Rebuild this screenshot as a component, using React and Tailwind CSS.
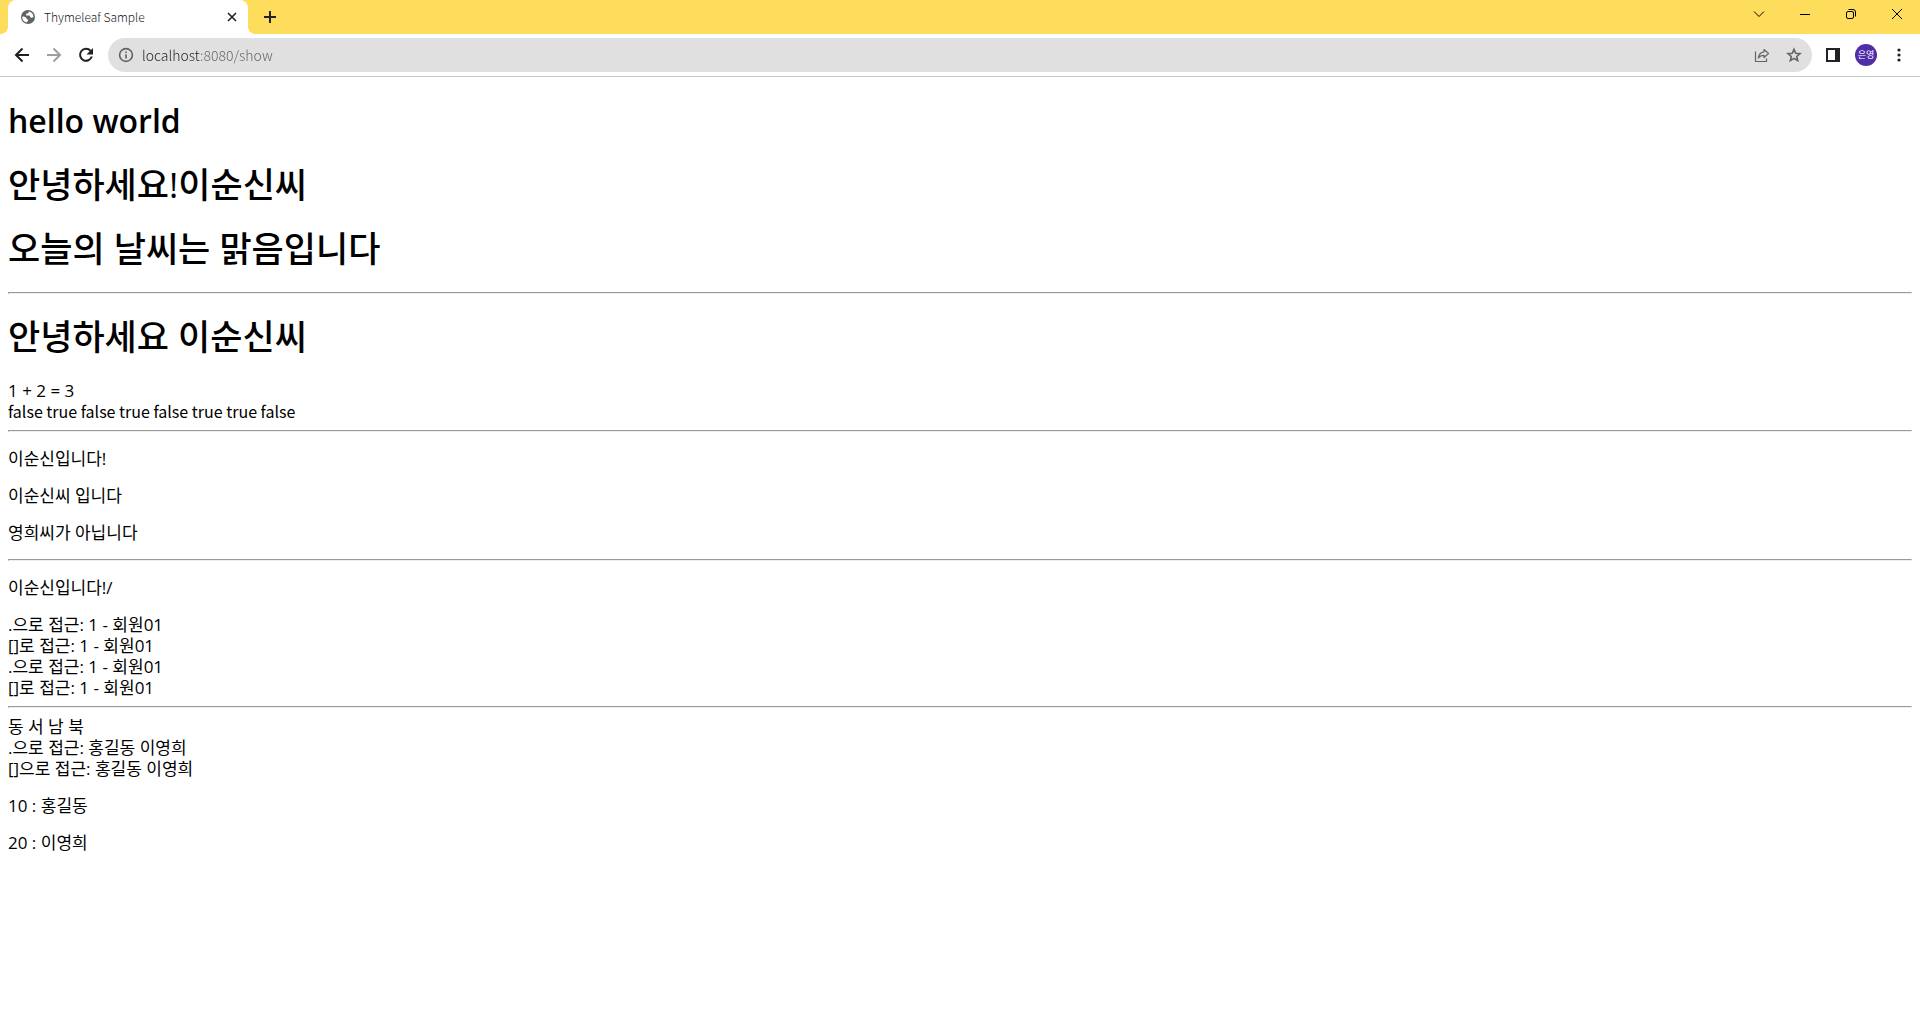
function Icon({ className = "size-5", children }) {
  return (
    <svg className={className} viewBox="0 0 20 20" fill="none" stroke="currentColor" strokeWidth="2" aria-hidden="true">
      {children}
    </svg>
  );
}

function GlobeIcon() {
  return (
    <svg className="size-4 shrink-0" viewBox="0 0 16 16" aria-hidden="true">
      <circle cx="8" cy="8" r="7" fill="#5f6368" />
      <path
        d="M8.8 2.4c-.3.9-.2 1.500-.9 1.800-.8.300-1.600.200-1.900 1-.2.700.3 1.300 1.100 1.400 1.200.1 2.500-.1 3 .9.300.6 0 1.100.8 1.200.9.100 1.500-.3 2.500-.4a5.800 5.800 0 0 0-4.600-5.900ZM2.300 7.500c1.300.1 2.900.1 3.800.9.700.7.200 1.500 1 1.900.7.300 1.200.2 1.200.9 0 .8-1.300 1-1.400 2.400A5.800 5.800 0 0 1 2.300 7.500Z"
        fill="#fff"
      />
    </svg>
  );
}

function ShareIcon() {
  return (
    <svg className="size-4" viewBox="0 0 16 16" fill="none" stroke="#5f6368" strokeWidth="1.2" aria-hidden="true">
      <path d="M1.500 4.500v10h11v-3" />
      <path d="M10 2.500 14.500 6.500 10 10.500V8.300C7.500 8.300 5.700 9 4.300 11c.4-3 2.100-5.700 5.700-6.200Z" strokeLinejoin="round" />
    </svg>
  );
}

function WindowControls() {
  return (
    <div className="flex h-7 items-center text-black">
      <button className="flex h-7 w-[46px] items-center justify-center" aria-label="Search tabs">
        <svg className="size-3" viewBox="0 0 12 12" fill="none" stroke="currentColor">
          <path d="M1 3.500 6 8.500 11 3.500" />
        </svg>
      </button>
      <button className="flex h-7 w-[46px] items-center justify-center" aria-label="Minimize">
        <svg className="size-3" viewBox="0 0 12 12" stroke="currentColor">
          <path d="M1 6.500h10" />
        </svg>
      </button>
      <button className="flex h-7 w-[46px] items-center justify-center" aria-label="Restore">
        <svg className="size-3" viewBox="0 0 12 12" fill="none" stroke="currentColor">
          <rect x="1.500" y="3.500" width="7" height="7" rx="1.500" />
          <path d="M3.500 1.500H8a2.500 2.500 0 0 1 2.500 2.500v4.500" />
        </svg>
      </button>
      <button className="flex h-7 w-[46px] items-center justify-center" aria-label="Close window">
        <svg className="size-3" viewBox="0 0 12 12" stroke="currentColor">
          <path d="M1 1 11 11M11 1 1 11" />
        </svg>
      </button>
    </div>
  );
}

function TabStrip() {
  return (
    <div className="flex h-[34px] items-start bg-[#ffdd5c] pl-2">
      <div className="relative flex h-[34px] w-60 items-center rounded-t-lg bg-white pr-2 pl-3">
        {/* flared bottom corners of the active tab */}
        <span className="absolute bottom-0 -left-2 size-2 bg-[radial-gradient(circle_at_0_0,#ffdd5c_8px,white_8px)]" />
        <span className="absolute -right-2 bottom-0 size-2 bg-[radial-gradient(circle_at_100%_0,#ffdd5c_8px,white_8px)]" />
        <GlobeIcon />
        <span className="ml-2 flex-1 text-xs font-light text-[#202124]">Thymeleaf Sample</span>
        <button className="flex size-4 items-center justify-center text-[#202124]" aria-label="Close tab">
          <Icon className="size-4">
            <path d="M5 5 15 15M15 5 5 15" />
          </Icon>
        </button>
      </div>
      <button className="ml-3 flex h-[34px] w-5 items-center justify-center text-[#202124]" aria-label="New tab">
        <Icon>
          <path d="M10 4v12M4 10h12" />
        </Icon>
      </button>
      <div className="ml-auto">
        <WindowControls />
      </div>
    </div>
  );
}

function Toolbar() {
  return (
    <div className="flex h-[43px] items-center border-b border-[#c8c8c8] bg-white pr-[11px] pl-3 text-[#202124]">
      <div className="flex items-center gap-3">
        <button className="size-5" aria-label="Back">
          <Icon>
            <path d="M17 10H4.500M10.500 3.500 4 10l6.500 6.500" />
          </Icon>
        </button>
        <button className="size-5 text-[#9e9e9e]" aria-label="Forward">
          <Icon>
            <path d="M3 10h12.500M9.500 3.500 16 10l-6.500 6.500" />
          </Icon>
        </button>
        <button className="size-5" aria-label="Reload">
          <Icon>
            <path d="M14.600 5.800A6 6 0 1 0 15.800 11.500" />
            <path d="M17 3v6.500h-6.500Z" fill="currentColor" stroke="none" />
          </Icon>
        </button>
      </div>
      <div className="ml-3 flex h-[34px] flex-1 items-center rounded-full bg-[#e0e0e0] pr-2.5 pl-2.5 text-[#5f6368]">
        <Icon className="size-4">
          <circle cx="10" cy="10" r="8" />
          <path d="M10 9v5.500M10 5.500v2" />
        </Icon>
        <input
          type="text"
          aria-label="Address"
          defaultValue="localhost:8080/show"
          className="ml-2 min-w-0 flex-1 bg-[linear-gradient(90deg,#202124_58px,#5f6368_58px)] bg-clip-text text-sm font-light text-transparent outline-none"
        />
        <div className="flex items-center gap-4">
          <button aria-label="Share">
            <ShareIcon />
          </button>
          <button aria-label="Bookmark">
            <Icon className="size-4">
              <path d="m10 2.800 2.100 5 5.400.5-4.100 3.500 1.200 5.300-4.600-2.800-4.600 2.800 1.200-5.300-4.100-3.500 5.400-.5Z" />
            </Icon>
          </button>
        </div>
      </div>
      <div className="ml-[11px] flex items-center gap-3">
        <button className="flex size-5 items-center justify-center" aria-label="Side panel">
          <svg className="size-3.5" viewBox="0 0 14 14" aria-hidden="true">
            <path d="M0 0h14v14H0ZM2 2v10h7V2Z" fill="currentColor" fillRule="evenodd" />
          </svg>
        </button>
        <button className="flex size-[22px] items-center justify-center rounded-full bg-[#512da8] text-[9px] text-white" aria-label="Profile">
          은영
        </button>
        <button className="size-5" aria-label="Menu">
          <Icon>
            <g fill="currentColor" stroke="none">
              <circle cx="10" cy="5" r="1.600" />
              <circle cx="10" cy="10" r="1.600" />
              <circle cx="10" cy="15" r="1.600" />
            </g>
          </Icon>
        </button>
      </div>
    </div>
  );
}

function Heading({ className = "text-[35px] font-medium", children }) {
  return <h1 className={`my-[22px] leading-[42px] ${className}`}>{children}</h1>;
}

function Rule() {
  return <hr className="my-2 border border-t-[#9a9a9a] border-r-[#eeeeee] border-b-[#eeeeee] border-l-[#9a9a9a]" />;
}

function Page() {
  return (
    <main className="px-2 pt-px font-['Open_Sans','Noto_Sans_CJK_KR',sans-serif] text-[17px] leading-[21px] text-black">
      <Heading className="text-[32px] font-semibold">hello world</Heading>
      <Heading>안녕하세요!이순신씨</Heading>
      <Heading>오늘의 날씨는 맑음입니다</Heading>
      <Rule />
      <Heading>안녕하세요 이순신씨</Heading>
      <div>1 + 2 = 3</div>
      <div className="font-['Noto_Sans_CJK_KR',sans-serif] text-base leading-[21px]">
        false true false true false true true false
      </div>
      <Rule />
      <p className="my-4">이순신입니다!</p>
      <p className="my-4">이순신씨 입니다</p>
      <p className="my-4">영희씨가 아닙니다</p>
      <Rule />
      <p className="my-4">이순신입니다!/</p>
      <div>.으로 접근: 1 - 회원01</div>
      <div>[]로 접근: 1 - 회원01</div>
      <div>.으로 접근: 1 - 회원01</div>
      <div>[]로 접근: 1 - 회원01</div>
      <Rule />
      <div>동 서 남 북</div>
      <div>.으로 접근: 홍길동 이영희</div>
      <div>[]으로 접근: 홍길동 이영희</div>
      <p className="my-4">10 : 홍길동</p>
      <p className="my-4">20 : 이영희</p>
    </main>
  );
}

export default function App() {
  return (
    <div className="min-h-screen bg-white font-['Noto_Sans_CJK_KR',sans-serif]">
      <TabStrip />
      <Toolbar />
      <Page />
    </div>
  );
}
